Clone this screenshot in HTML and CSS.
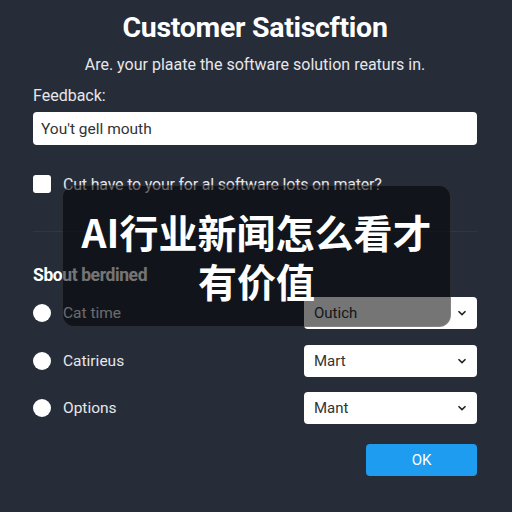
FILE: index.html
```html
<!DOCTYPE html>
<html lang="en">
<head>
<meta charset="utf-8">
<link rel="stylesheet" href="styles.css">
</head>
<body>
<div class="page">
  <h1 class="title">Customer Satiscftion</h1>
  <p class="subtitle">Are. your plaate the software solution reaturs in.</p>
  <label class="field-label">Feedback:</label>
  <div class="input">You't gell mouth</div>
  <div class="check-row">
    <span class="checkbox"></span>
    <span class="check-text">Cut have to your for al software lots on mater?</span>
  </div>
  <div class="divider"></div>
  <h2 class="section">Sbout berdined</h2>
  <div class="rows">
    <div class="row">
      <span class="radio"></span><span class="row-label">Cat time</span>
      <div class="select"><span>Outich</span><svg class="chev" viewBox="0 0 10 6" width="10" height="6"><path d="M1.5 1.2 L5 4.6 L8.5 1.2" fill="none" stroke="#222" stroke-width="1.6"/></svg></div>
    </div>
    <div class="row">
      <span class="radio"></span><span class="row-label">Catirieus</span>
      <div class="select"><span>Mart</span><svg class="chev" viewBox="0 0 10 6" width="10" height="6"><path d="M1.5 1.2 L5 4.6 L8.5 1.2" fill="none" stroke="#222" stroke-width="1.6"/></svg></div>
    </div>
    <div class="row">
      <span class="radio"></span><span class="row-label">Options</span>
      <div class="select"><span>Mant</span><svg class="chev" viewBox="0 0 10 6" width="10" height="6"><path d="M1.5 1.2 L5 4.6 L8.5 1.2" fill="none" stroke="#222" stroke-width="1.6"/></svg></div>
    </div>
  </div>
  <div class="actions"><button class="ok">OK</button></div>
</div>
<div class="overlay">
  <div class="overlay-text">AI行业新闻怎么看才<br>有价值</div>
</div>
</body>
</html>
```
FILE: styles.css
```css
html, body {
  margin: 0;
  padding: 0;
  width: 512px;
  height: 512px;
  overflow: hidden;
  background: #272c39;
  font-family: Roboto, "Noto Sans", sans-serif;
  color: #e8e9ec;
}
.page {
  padding: 11px 35px 0 33px;
  display: flex;
  flex-direction: column;
}
.title {
  margin: 0;
  text-align: center;
  font-size: 28.5px;
  font-weight: 700;
  line-height: 34px;
  color: #ffffff;
  letter-spacing: -0.3px;
}
.subtitle {
  margin: 11px 0 0;
  text-align: center;
  font-size: 16px;
  line-height: 18px;
  color: #e6e7ea;
}
.field-label {
  margin-top: 13px;
  font-size: 16px;
  line-height: 18px;
  color: #e6e7ea;
}
.input {
  margin-top: 7px;
  height: 33px;
  box-sizing: border-box;
  background: #ffffff;
  border-radius: 4px;
  padding: 0 8px;
  display: flex;
  align-items: center;
  font-size: 15.5px;
  color: #333;
}
.check-row {
  margin-top: 30px;
  display: flex;
  align-items: center;
  gap: 12px;
  height: 18px;
}
.checkbox {
  width: 18px;
  height: 18px;
  background: #fff;
  border-radius: 3px;
  flex: none;
}
.check-text {
  font-size: 16px;
  color: #e6e7ea;
  letter-spacing: -0.2px;
}
.divider {
  margin-top: 38px;
  height: 1px;
  background: rgba(255,255,255,0.05);
}
.section {
  margin: 33px 0 0;
  font-size: 17.5px;
  line-height: 20px;
  font-weight: 700;
  color: #ffffff;
  letter-spacing: -0.4px;
}
.rows {
  margin-top: 12px;
  display: flex;
  flex-direction: column;
  gap: 15.5px;
}
.row {
  display: flex;
  align-items: center;
  height: 32px;
}
.radio {
  width: 18px;
  height: 18px;
  border-radius: 50%;
  background: #fff;
  flex: none;
}
.row-label {
  margin-left: 12px;
  font-size: 15.5px;
  color: #e6e7ea;
  flex: 1;
}
.select {
  width: 173px;
  height: 32px;
  box-sizing: border-box;
  background: #fff;
  border-radius: 4px;
  padding: 0 10px;
  display: flex;
  align-items: center;
  justify-content: space-between;
  font-size: 15px;
  color: #333;
}
.actions {
  margin-top: 20px;
  display: flex;
  justify-content: flex-end;
}
.ok {
  width: 111px;
  height: 32px;
  border: none;
  border-radius: 4px;
  background: #1d9cf0;
  color: #fff;
  font-family: Roboto, sans-serif;
  font-size: 15px;
}
.overlay {
  position: absolute;
  left: 62px;
  top: 185px;
  width: 389px;
  height: 142px;
  box-sizing: border-box;
  background: rgba(0,0,0,0.54);
  border: 1px solid rgba(255,255,255,0.1);
  border-radius: 12px;
  display: flex;
  align-items: center;
  justify-content: center;
}
.overlay-text {
  font-family: "Noto Sans CJK SC", sans-serif;
  font-weight: 700;
  font-size: 39px;
  line-height: 49px;
  text-align: center;
  color: #fff;
}
```
